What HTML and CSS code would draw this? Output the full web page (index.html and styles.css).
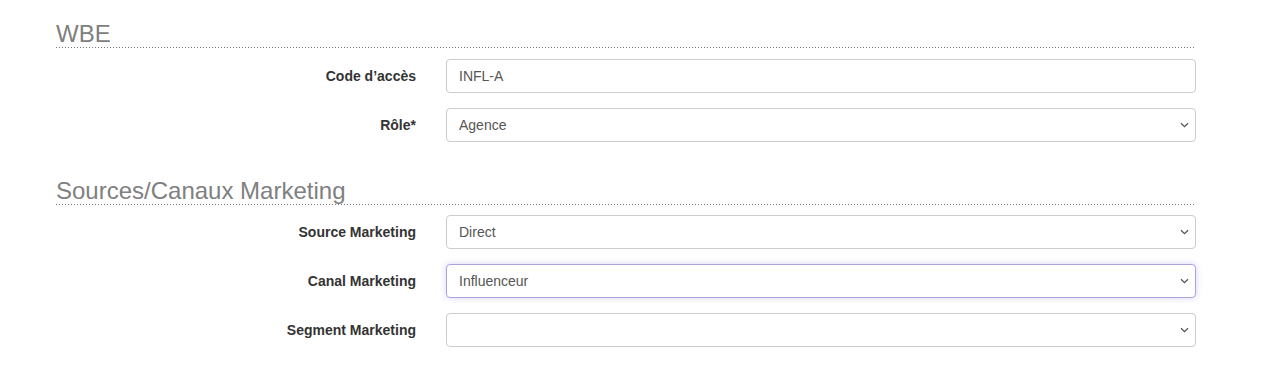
FILE: index.html
```html
<!DOCTYPE html>
<html lang="fr">
<head>
  <meta charset="UTF-8" />
  <meta name="viewport" content="width=device-width, initial-scale=1" />
  <title>Fiche client</title>
  <link rel="stylesheet" href="styles.css">
</head>
<body>
  <form class="client-form" id="clientForm">
    <fieldset class="form-section">
      <h3 class="section-title">WBE</h3>

      <div class="form-row">
        <label for="accessCode">Code d’accès</label>
        <div class="field">
          <input type="text" id="accessCode" name="accessCode" value="INFL-A" />
        </div>
      </div>

      <div class="form-row">
        <label for="role">Rôle*</label>
        <div class="field">
          <select id="role" name="role">
            <option value="agence" selected>Agence</option>
            <option value="client">Client</option>
          </select>
        </div>
      </div>
    </fieldset>

    <fieldset class="form-section">
      <h3 class="section-title">Sources/Canaux Marketing</h3>

      <div class="form-row">
        <label for="source">Source Marketing</label>
        <div class="field">
          <select id="source" name="source">
            <option value="direct" selected>Direct</option>
            <option value="partenaire">Partenaire</option>
          </select>
        </div>
      </div>

      <div class="form-row">
        <label for="canal">Canal Marketing</label>
        <div class="field">
          <select id="canal" name="canal" class="is-focused">
            <option value="influenceur" selected>Influenceur</option>
            <option value="presse">Presse</option>
          </select>
        </div>
      </div>

      <div class="form-row">
        <label for="segment">Segment Marketing</label>
        <div class="field">
          <select id="segment" name="segment">
            <option value="" selected></option>
            <option value="b2b">B2B</option>
          </select>
        </div>
      </div>
    </fieldset>
  </form>
</body>
</html>
```

FILE: styles.css
```css
body {
  margin: 0;
  background: #fff;
  font-family: 'Liberation Sans', Arial, sans-serif;
  font-size: 14px;
  color: #333;
}
.client-form {
  width: 1140px;
  margin-left: 56px;
  padding-top: 22px;
}
.form-section {
  border: none;
  margin: 0;
  padding: 0;
}
.form-section + .form-section {
  margin-top: 22px;
}
.section-title {
  margin: 0 0 11px;
  padding: 0 0 2px;
  font-size: 24px;
  font-weight: normal;
  line-height: 24px;
  color: #808080;
  background-image: linear-gradient(to right, #777 1px, transparent 1px);
  background-size: 3px 1px;
  background-repeat: repeat-x;
  background-position: left bottom;
}
.form-section + .form-section .section-title {
  margin-bottom: 10px;
}
.form-row {
  display: flex;
  align-items: center;
  margin-bottom: 15px;
}
.form-row label {
  width: 360px;
  padding-right: 30px;
  text-align: right;
  font-weight: bold;
  color: #333;
}
.field {
  flex: 1;
}
input, select {
  display: block;
  width: 100%;
  height: 34px;
  box-sizing: border-box;
  padding: 6px 12px;
  border: 1px solid #ccc;
  border-radius: 4px;
  background-color: #fff;
  font-family: inherit;
  font-size: 14px;
  color: #555;
  outline: none;
}
select {
  appearance: none;
  -webkit-appearance: none;
  padding-right: 30px;
  background-image: url("data:image/svg+xml,%3Csvg xmlns='http://www.w3.org/2000/svg' width='9' height='6' viewBox='0 0 9 6'%3E%3Cpath d='M1 1.2l3.5 3.5 3.5-3.5' fill='none' stroke='%23555' stroke-width='1.3'/%3E%3C/svg%3E");
  background-repeat: no-repeat;
  background-position: right 6px center;
  background-size: 9px 6px;
}
select.is-focused {
  border-color: #aaa6dd;
  box-shadow: 0 0 6px rgba(120, 110, 220, 0.3);
}
```
